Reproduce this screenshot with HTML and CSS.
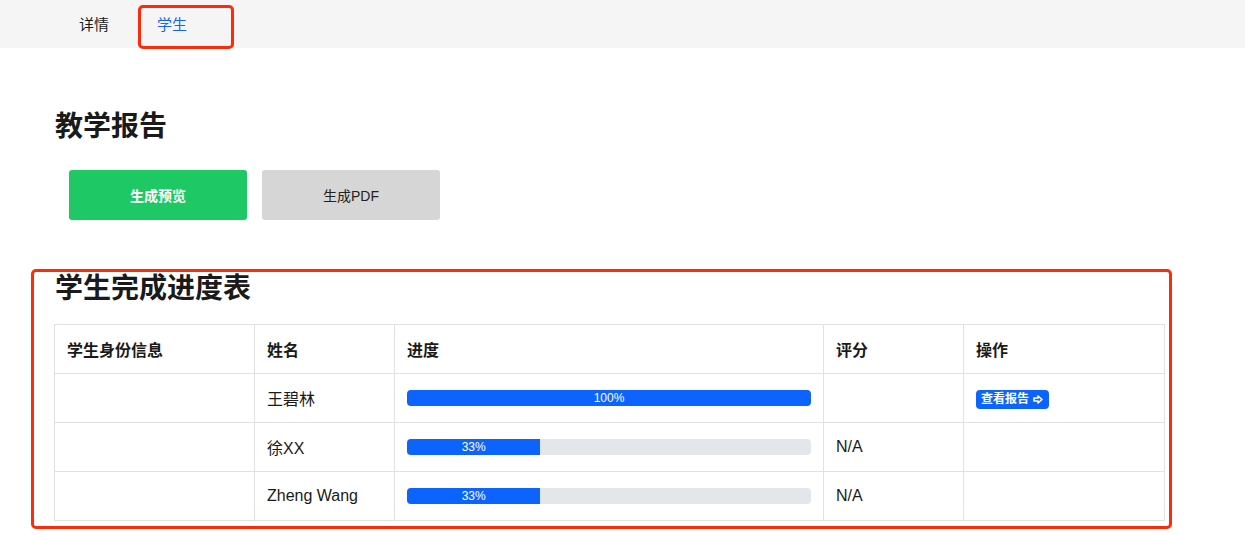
FILE: index.html
```html
<!DOCTYPE html>
<html lang="zh">
<head>
<meta charset="utf-8">
<title>学生</title>
<link rel="stylesheet" href="styles.css">
</head>
<body>
<nav class="topbar">
  <a class="tab">详情</a>
  <a class="tab active">学生</a>
</nav>
<main class="main">
  <h2 class="title">教学报告</h2>
  <div class="actions">
    <button class="btn btn-green">生成预览</button>
    <button class="btn btn-gray">生成PDF</button>
  </div>
  <h2 class="title title-2">学生完成进度表</h2>
  <table class="grid">
    <colgroup>
      <col style="width:200px">
      <col style="width:140px">
      <col style="width:429px">
      <col style="width:140px">
      <col style="width:201px">
    </colgroup>
    <thead>
      <tr><th>学生身份信息</th><th>姓名</th><th>进度</th><th>评分</th><th>操作</th></tr>
    </thead>
    <tbody>
      <tr>
        <td></td><td>王碧林</td>
        <td><div class="progress"><div class="bar" style="width:100%">100%</div></div></td>
        <td></td>
        <td><span class="badge">查看报告 <svg class="arrow" width="10" height="9" viewBox="0 0 10 9"><path d="M1 3H5V1L9 4.5L5 8V6H1Z" fill="none" stroke="#fff" stroke-width="1.6" stroke-linejoin="round"/></svg></span></td>
      </tr>
      <tr>
        <td></td><td>徐XX</td>
        <td><div class="progress"><div class="bar" style="width:33%">33%</div></div></td>
        <td>N/A</td><td></td>
      </tr>
      <tr>
        <td></td><td>Zheng Wang</td>
        <td><div class="progress"><div class="bar" style="width:33%">33%</div></div></td>
        <td>N/A</td><td></td>
      </tr>
    </tbody>
  </table>
</main>
<div class="mark mark-tab"></div>
<div class="mark mark-table"></div>
</body>
</html>
```
FILE: styles.css
```css
* { box-sizing: border-box; }
html, body { min-height: 535px; }
body {
  margin: 0;
  font-family: "Liberation Sans", "Noto Sans CJK SC", sans-serif;
  color: #212529;
  background: #fff;
  position: relative;
}
.topbar {
  height: 48px;
  background: #f5f5f5;
  display: flex;
  padding-left: 55px;
}
.tab {
  padding: 0 24px;
  line-height: 49px;
  font-size: 15px;
  color: #1a1a1a;
}
.tab.active { color: #1463ff; }
.main { padding: 0 0 14px 55px; }
.title {
  margin: 62px 0 0;
  font-size: 28px;
  line-height: 34px;
  font-weight: 600;
  color: #1a1a1a;
}
.title-2 { margin-top: 52px; }
.actions {
  display: flex;
  gap: 15px;
  padding-left: 14px;
  margin-top: 26px;
}
.btn {
  width: 178px;
  height: 50px;
  border: none;
  border-radius: 3px;
  font-family: inherit;
  font-size: 14px;
}
.btn-green { background: #1ec864; color: #fff; font-weight: bold; }
.btn-gray { background: #d6d6d6; color: #222; }
.grid {
  margin-top: 18px;
  margin-left: -1px;
  width: 1110px;
  border-collapse: collapse;
  table-layout: fixed;
  font-size: 16px;
}
.grid th, .grid td {
  border: 1px solid #dee2e6;
  height: 49px;
  padding: 0 12px;
  text-align: left;
  vertical-align: middle;
  color: #1a1a1a;
}
.grid th { font-weight: 600; }
.progress {
  height: 16px;
  background: #e3e6ea;
  border-radius: 4px;
  overflow: hidden;
  display: flex;
}
.bar {
  background: #0d63fd;
  color: #fff;
  font-size: 12px;
  line-height: 16px;
  text-align: center;
}
.badge {
  display: inline-flex;
  align-items: center;
  gap: 4px;
  background: #0d63fd;
  color: #fff;
  font-size: 12px;
  font-weight: bold;
  line-height: 19px;
  padding: 0 6px 0 5px;
  border-radius: 4px;
  position: relative;
  top: 1px;
}
.mark {
  position: absolute;
  border: 3px solid #ff2a0a;
  border-radius: 5px;
}
.mark-tab { left: 138px; top: 5px; width: 96px; height: 44px; }
.mark-table { left: 31px; top: 269px; width: 1141px; height: 260px; }
```
